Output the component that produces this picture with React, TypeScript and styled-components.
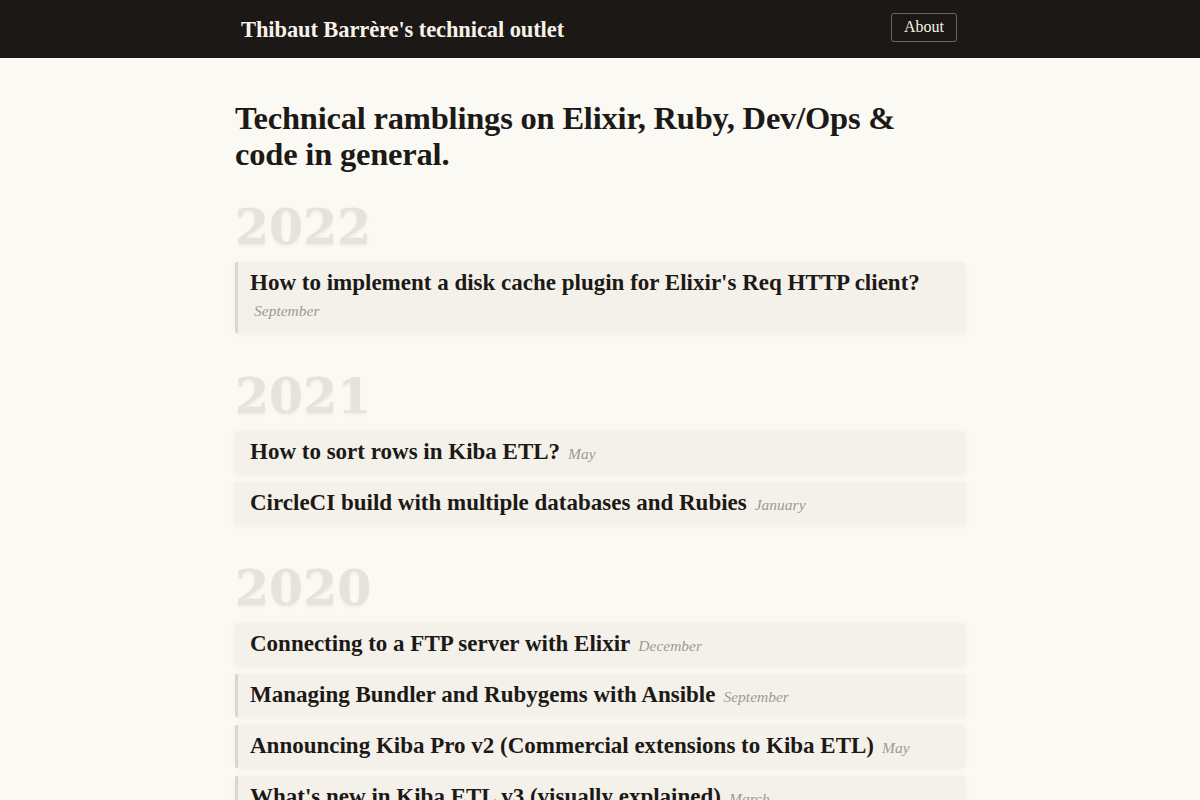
import styled, { createGlobalStyle } from "styled-components";

const GlobalStyle = createGlobalStyle`
  body {
    margin: 0;
    background-color: #fbf9f3;
    color: #1c1916;
    font-family: "Liberation Serif", "DejaVu Serif", serif;
  }
`;

const Header = styled.header`
  height: 58px;
  background-color: #1c1815;
  display: flex;
  justify-content: center;
`;

const HeaderInner = styled.div`
  width: 716px;
  margin-left: -2px;
  display: flex;
  align-items: center;
  justify-content: space-between;
`;

const SiteTitle = styled.a`
  font-size: 22.5px;
  font-weight: bold;
  color: #f6f2ea;
  text-decoration: none;
  letter-spacing: -0.1px;
  margin-top: 2px;
`;

const AboutLink = styled.a`
  font-size: 16px;
  line-height: 19px;
  color: #f6f2ea;
  text-decoration: none;
  border: 1px solid #6b6661;
  border-radius: 3px;
  padding: 3px 12px 5px;
  align-self: flex-start;
  margin-top: 13px;
`;

const Main = styled.main`
  width: 730px;
  margin: 0 auto;
  padding-top: 42px;
`;

const Tagline = styled.h1`
  max-width: 690px;
  font-size: 32.5px;
  line-height: 36px;
  font-weight: bold;
  margin: 0 0 26px;
  letter-spacing: -0.2px;
`;

const YearSection = styled.section`
  margin-bottom: 34px;
`;

const Year = styled.h2`
  font-family: "DejaVu Serif", serif;
  font-size: 49px;
  line-height: 58px;
  font-weight: bold;
  color: #e6e3dc;
  text-shadow: 0 2px 3px rgba(0, 0, 0, 0.05);
  margin: 0 0 6px;
`;

const PostList = styled.ul`
  list-style: none;
  margin: 0;
  padding: 0;
  display: flex;
  flex-direction: column;
  gap: 8px;
`;

const PostCard = styled.li<{ $marked: boolean }>`
  background-color: #f4f1eb;
  border-left: 3px solid ${(p) => (p.$marked ? "#d9d6cf" : "#f4f1eb")};
  box-shadow: 0 1px 6px rgba(60, 40, 20, 0.05);
  padding: 9px 12px 10px;
  border-radius: 2px;
`;

const PostTitle = styled.a`
  font-size: 23px;
  line-height: 24px;
  font-weight: bold;
  color: #1c1916;
  text-decoration: none;
  margin-right: 8px;
`;

const PostDate = styled.span<{ $below?: boolean }>`
  font-size: 15.5px;
  font-style: italic;
  color: #9e9a92;
  display: ${(p) => (p.$below ? "block" : "inline")};
  margin-top: ${(p) => (p.$below ? "7px" : "0")};
  margin-bottom: ${(p) => (p.$below ? "3px" : "0")};
  margin-left: ${(p) => (p.$below ? "4px" : "0")};
`;

type Post = { title: string; month: string; marked: boolean; below?: boolean };

const years: { year: string; posts: Post[] }[] = [
  {
    year: "2022",
    posts: [
      {
        title: "How to implement a disk cache plugin for Elixir's Req HTTP client?",
        month: "September",
        marked: true,
        below: true,
      },
    ],
  },
  {
    year: "2021",
    posts: [
      { title: "How to sort rows in Kiba ETL?", month: "May", marked: false },
      { title: "CircleCI build with multiple databases and Rubies", month: "January", marked: false },
    ],
  },
  {
    year: "2020",
    posts: [
      { title: "Connecting to a FTP server with Elixir", month: "December", marked: false },
      { title: "Managing Bundler and Rubygems with Ansible", month: "September", marked: true },
      { title: "Announcing Kiba Pro v2 (Commercial extensions to Kiba ETL)", month: "May", marked: true },
      { title: "What's new in Kiba ETL v3 (visually explained)", month: "March", marked: true },
    ],
  },
];

const App = () => {
  return (
    <>
      <GlobalStyle />
      <Header>
        <HeaderInner>
          <SiteTitle href="#">Thibaut Barrère's technical outlet</SiteTitle>
          <AboutLink href="#">About</AboutLink>
        </HeaderInner>
      </Header>
      <Main>
        <Tagline>Technical ramblings on Elixir, Ruby, Dev/Ops &amp; code in general.</Tagline>
        {years.map((y) => (
          <YearSection key={y.year}>
            <Year>{y.year}</Year>
            <PostList>
              {y.posts.map((post, idx) => (
                <PostCard key={`post${idx}`} $marked={post.marked}>
                  <PostTitle href="#">{post.title}</PostTitle>
                  <PostDate $below={post.below}>{post.month}</PostDate>
                </PostCard>
              ))}
            </PostList>
          </YearSection>
        ))}
      </Main>
    </>
  );
};

export default App;
